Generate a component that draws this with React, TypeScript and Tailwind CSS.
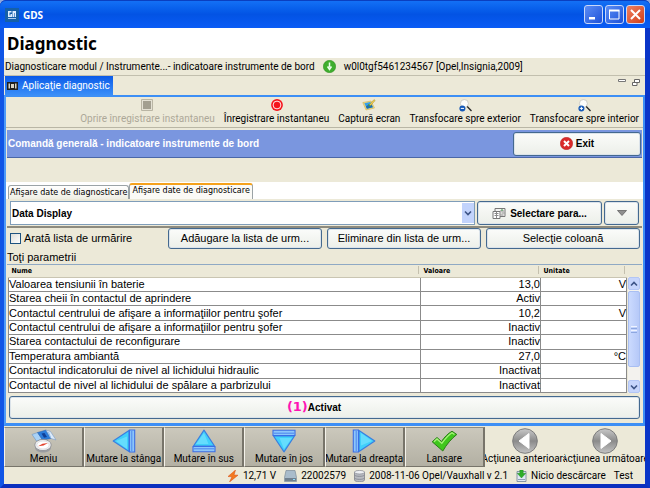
import React from "react";

const UI = "font-[Roboto,Tahoma,sans-serif]";
const TITLE = "font-['Noto_Sans',Tahoma,sans-serif]";
const ARIAL = "font-['Liberation_Sans',Arial,sans-serif]";
const BOLD = "font-['Liberation_Sans',Arial,sans-serif] text-[10px] font-bold";
const SMALL = "font-['DejaVu_Sans_Condensed','DejaVu_Sans',sans-serif]";
const BUTTON =
  "flex items-center justify-center rounded-[3px] border border-[#44698f] bg-linear-to-b from-[#fbfcfa] to-[#ecefe9] shadow-[inset_0_0_0_1px_#dbe3ea] whitespace-nowrap text-black";

const rows = [
  ["Valoarea tensiunii în baterie", "13,0", "V"],
  ["Starea cheii în contactul de aprindere", "Activ", ""],
  ["Contactul centrului de afişare a informaţiilor pentru şofer", "10,2", "V"],
  ["Contactul centrului de afişare a informaţiilor pentru şofer", "Inactiv", ""],
  ["Starea contactului de reconfigurare", "Inactiv", ""],
  ["Temperatura ambiantă", "27,0", "°C"],
  ["Contactul indicatorului de nivel al lichidului hidraulic", "Inactivat", ""],
  ["Contactul de nivel al lichidului de spălare a parbrizului", "Inactivat", ""],
];

function TitleBar() {
  const control =
    "flex h-[19px] w-[19px] items-center justify-center rounded-[3px] border border-[#c8d8fa]";
  return (
    <header className="flex h-7 shrink-0 items-center rounded-t-md border-t border-[#0a3fc0] bg-linear-to-b from-[#1470f5] via-[#0353e4] to-[#0a5cf5] pr-[5px] pl-[5px]">
      <svg className="h-[14px] w-[14px]" viewBox="0 0 14 14" aria-hidden="true">
        <rect width="14" height="14" fill="#1560a8" />
        <path d="M3 3h3.500v1.500H4.500v3h1V6H7v3H3zM7.500 3h3.500v6H9.800V5h-.6v4H7.500zM3 10h8v.8H3z" fill="#dfeeff" />
      </svg>
      <span className={`${TITLE} ml-1 flex-1 text-[10px] leading-4 font-bold text-white`}>GDS</span>
      <div className="flex gap-[2px]">
        <button aria-label="Minimizare" className={`${control} bg-linear-to-br from-[#5c8df5] to-[#1e50d8]`}>
          <svg className="h-[13px] w-[13px]" viewBox="0 0 13 13"><path d="M2 9h6v2.500H2z" fill="#fff" /></svg>
        </button>
        <button aria-label="Maximizare" className={`${control} bg-linear-to-br from-[#5c8df5] to-[#1e50d8]`}>
          <svg className="h-[13px] w-[13px]" viewBox="0 0 13 13"><path d="M1.500 2.500h9.500v8.500H1.500z" fill="none" stroke="#fff" /><path d="M1 1.500h10.500v2H1z" fill="#fff" /></svg>
        </button>
        <button aria-label="Închidere" className={`${control} bg-linear-to-br from-[#f08060] to-[#d03c10]`}>
          <svg className="h-[13px] w-[13px]" viewBox="0 0 13 13"><path d="M2 2l9 9M11 2l-9 9" stroke="#fff" strokeWidth="2" /></svg>
        </button>
      </div>
    </header>
  );
}

function StopIcon() {
  return (
    <svg className="h-3 w-3" viewBox="0 0 12 12">
      <path d="M.5.5h11v11H.5z" fill="#e4e1d4" stroke="#b9b5a4" />
      <path d="M2 2h8v8H2z" fill="#a39f90" />
    </svg>
  );
}

function RecordIcon() {
  return (
    <svg className="h-3 w-3" viewBox="0 0 12 12">
      <circle cx="6" cy="6" r="5.900" fill="#f5141c" />
      <circle cx="6" cy="6" r="3.900" fill="none" stroke="#fff" strokeWidth=".9" />
    </svg>
  );
}

function CaptureIcon() {
  return (
    <svg className="h-3 w-[14px]" viewBox="0 0 14 12">
      <path d="M.8 3.500L9 2l3.500 7L4 11z" fill="#f0d97a" stroke="#c9a94a" strokeWidth=".5" />
      <path d="M2.300 4.300l6-1.200 2.600 5.200-6 1.500z" fill="#36a0ea" />
      <path d="M3.800 7.500l2.500-1.700 1.500 1 2-.8 1.100 2.300-6 1.500z" fill="#1f6fae" />
      <path d="M6 5l2 .5 1 1.500-2 .5z" fill="#3e9c4c" />
      <path d="M7.300 5.800L12 .6l1.200 1L8.600 6.500z" fill="#f2cf49" stroke="#8b7a35" strokeWidth=".4" />
    </svg>
  );
}

function LensIcon({ plus }: { plus?: boolean }) {
  return (
    <svg className="h-[13px] w-[13px]" viewBox="0 0 13 13">
      <circle cx="5.400" cy="4.500" r="4" fill="#fdfdfb" stroke="#c3c2bc" strokeWidth=".8" />
      <path d="M8.200 7.500l4.300 4.500" stroke="#282828" strokeWidth="1.300" />
      <circle cx="3.400" cy="9.400" r="3" fill="#1559b8" />
      <path d="M1.800 9.400h3.200" stroke="#fff" />
      {plus && <path d="M3.400 7.800v3.200" stroke="#fff" />}
    </svg>
  );
}

function ToolButton({ icon, label, disabled }: { icon: React.ReactNode; label: string; disabled?: boolean }) {
  return (
    <button disabled={disabled} className="flex flex-col items-center whitespace-nowrap text-black disabled:text-[#aca899]">
      <span className="flex h-[14px] items-center">{icon}</span>
      <span className="leading-[14px]">{label}</span>
    </button>
  );
}

function MenuIcon() {
  return (
    <svg className="h-6 w-[26px]" viewBox="0 0 26 24">
      <path d="M1 5.500L6.500 3.500l5 7L5.500 12z" fill="#a9d2f7" stroke="#6f93bd" strokeWidth=".6" />
      <path d="M6.500 3.500L15 1l5 8.500-8.500 1.500z" fill="#2b7ddb" stroke="#2a5fa8" strokeWidth=".5" />
      <path d="M10.500 4.500l3-.5 2.500 4-3 .8z" fill="#0f3f96" />
      <path d="M15 1l4.500 1.500L25 11l-5-1.500z" fill="#dcebfb" stroke="#7b9cc4" strokeWidth=".6" />
      <path d="M17.500 3l2 5.500" stroke="#8fc0f2" />
      <path d="M4 16.500v2.500c1 6 15 6 16 0v-2.500z" fill="#9a9ca0" />
      <ellipse cx="12" cy="16" rx="8.200" ry="5.600" fill="#f1f1f3" stroke="#8a8c90" strokeWidth=".8" />
      <ellipse cx="12" cy="16" rx="6.200" ry="4" fill="#fff" stroke="#c5c7cb" strokeWidth=".5" />
      <path d="M7 17.200l4.500-2.400 5.500-.8-4.500 2.600z" fill="#e2412c" />
    </svg>
  );
}

function ArrowIcon({ turn }: { turn: string }) {
  return (
    <svg className={`h-6 w-6 ${turn}`} viewBox="0 0 24 24">
      <path d="M12 1.200L22.500 17h-21z" fill="#3fd0fb" stroke="#3a7fe0" strokeWidth="1.200" strokeLinejoin="round" />
      <path d="M12 4l4.500 11H4z" fill="#7fe6ff" opacity=".6" />
      <path d="M1 17.500h22v5.200H1z" fill="#8cc6fb" stroke="#3b6ee6" strokeWidth="1.100" />
      <path d="M2 19.800h20" stroke="#4c86ee" />
    </svg>
  );
}

function CheckIcon() {
  return (
    <svg className="h-6 w-[27px]" viewBox="0 0 27 24">
      <path d="M1.200 12.800L6 8.500l4.500 4C13 8.500 17 4.500 21 2.200l4.800 3.300C20.500 9.500 15.500 15.500 11.800 22z" fill="#3fc71c" stroke="#2a7d18" strokeWidth="1" strokeLinejoin="round" />
      <path d="M3 12.700L6 10l4.800 4.400C14 10 17.500 6 21 3.800l2.500 1.700" fill="none" stroke="#a9f27c" strokeWidth="1.300" />
    </svg>
  );
}

function RoundIcon({ next }: { next?: boolean }) {
  return (
    <svg className="h-[26px] w-[26px]" viewBox="0 0 26 26">
      <defs>
        <linearGradient id="steel" x1="0" y1="0" x2="0" y2="1">
          <stop offset="0" stopColor="#c9c9c9" />
          <stop offset=".5" stopColor="#8b8b8b" />
          <stop offset="1" stopColor="#c4c4c4" />
        </linearGradient>
      </defs>
      <circle cx="13" cy="13" r="12.300" fill="url(#steel)" stroke="#7d7d7d" />
      <path d={next ? "M9 5.500v15L19 13z" : "M17 5.500v15L7 13z"} fill="#fff" stroke="#fff" strokeLinejoin="round" />
    </svg>
  );
}

function BigButton({ icon, label }: { icon: React.ReactNode; label: string }) {
  return (
    <button className="flex h-10 min-w-0 flex-col items-center overflow-hidden border border-r-2 border-t-[#8f8c80] border-r-[#77746a] border-b-[#77746a] border-l-[#f4f2ea] bg-linear-to-b from-[#cbc8bc] to-[#b3b0a3] whitespace-nowrap">
      <span className="flex h-[25px] items-center">{icon}</span>
      <span className="leading-3">{label}</span>
    </button>
  );
}

function FlatButton({ icon, label }: { icon: React.ReactNode; label: string }) {
  return (
    <button className="flex h-10 min-w-0 flex-col items-center overflow-hidden pt-px whitespace-nowrap">
      <span className="flex h-[25px] items-center">{icon}</span>
      <span className="leading-3">{label}</span>
    </button>
  );
}

function ScrollBar() {
  const end = "flex h-[13px] shrink-0 items-center justify-center rounded-[2px] border border-[#b3c6f5] bg-[#c6d5fc]";
  return (
    <div className="flex w-3 shrink-0 flex-col bg-[#f3f2ee]">
      <button aria-label="Sus" className={end}>
        <svg className="h-2 w-2" viewBox="0 0 8 8"><path d="M1 5.500l3-3 3 3" fill="none" stroke="#3d5486" strokeWidth="1.600" /></svg>
      </button>
      <div className="mt-px flex h-[76px] flex-col items-center justify-center gap-px rounded-[2px] border border-[#a9bff2] bg-linear-to-r from-[#cbdafe] to-[#b6c9f8]">
        <i className="h-px w-[6px] bg-[#eef3ff]" />
        <i className="h-px w-[6px] bg-[#8da7e0]" />
        <i className="h-px w-[6px] bg-[#eef3ff]" />
        <i className="h-px w-[6px] bg-[#8da7e0]" />
      </div>
      <div className="flex-1" />
      <button aria-label="Jos" className={end}>
        <svg className="h-2 w-2" viewBox="0 0 8 8"><path d="M1 2.500l3 3 3-3" fill="none" stroke="#3d5486" strokeWidth="1.600" /></svg>
      </button>
    </div>
  );
}

function ParameterTable() {
  return (
    <div className="border-t border-[#8fa9c4] pr-[2px] pl-px">
      <div className="flex gap-px">
        <div className="flex-1">
          <table className="h-32 w-full table-fixed border-collapse text-[11px]">
            <colgroup>
              <col />
              <col className="w-[120px]" />
              <col className="w-[86px]" />
            </colgroup>
            <thead>
              <tr className={`${SMALL} h-3 text-left text-[7px] leading-[10px]`}>
                {["Nume", "Valoare", "Unitate"].map((name) => (
                  <th key={name} className="border-b border-[#c9c5b2] p-0 pl-[3px] font-bold">
                    <span className="flex justify-between">
                      {name}
                      <i className="mr-[2px] h-2 w-px bg-[#c4c0ae]" />
                    </span>
                  </th>
                ))}
              </tr>
            </thead>
            <tbody className="bg-white">
              {rows.map(([name, value, unit], i) => (
                <tr key={i} className="leading-[13px]">
                  <td className="border border-t-0 border-[#8b8b8b] p-0 whitespace-nowrap">{name}</td>
                  <td className="border border-t-0 border-[#8b8b8b] p-0 text-right">{value}</td>
                  <td className="border border-t-0 border-[#8b8b8b] p-0 text-right">{unit}</td>
                </tr>
              ))}
            </tbody>
          </table>
        </div>
        <div className="flex pt-3">
          <ScrollBar />
        </div>
      </div>
    </div>
  );
}

function DataPanel() {
  return (
    <div className={`${ARIAL} mx-px flex flex-col`}>
      <div className="flex items-center border-b-2 border-[#8e8b7e] pt-[2px] pr-[3px] pb-px pl-[3px]">
        <div className="relative mr-[2px] flex-1">
          <select aria-label="Afişare" className={`${BOLD} block h-6 w-full appearance-none border border-[#7f9db9] bg-white pl-px`}>
            <option>Data Display</option>
          </select>
          <span className="pointer-events-none absolute top-[2px] right-px flex h-5 w-3 items-center justify-center bg-[#c2d3fc]">
            <svg className="h-2 w-2" viewBox="0 0 8 8"><path d="M1 2.500l3 3 3-3" fill="none" stroke="#3d5486" strokeWidth="1.600" /></svg>
          </span>
        </div>
        <button className={`${BUTTON} ${BOLD} mr-[2px] h-6 w-[125px] gap-1`}>
          <svg className="h-[13px] w-[14px]" viewBox="0 0 14 13">
            <path d="M3 1.500h10v8H3z" fill="#f3f3f1" stroke="#777" />
            <path d="M1 4.500h7v7H1z" fill="#fff" stroke="#777" />
            <path d="M2.500 6.500h4M2.500 8.500h4M4.500 5v6M8 4h4M9.500 6h3M8.500 8h3" stroke="#8b8b8b" />
            <path d="M9 3h2" stroke="#3f9a4a" />
          </svg>
          Selectare para...
        </button>
        <button aria-label="Mai multe" className={`${BUTTON} h-6 w-[35px]`}>
          <svg className="h-[6px] w-[10px]" viewBox="0 0 10 6"><path d="M.5.5h9L5 5.500z" fill="#8f8f8f" stroke="#555" strokeWidth=".7" /></svg>
        </button>
      </div>
      <div className="flex items-center gap-[5px] pr-[2px] text-[11px]">
        <label className="flex flex-1 items-center gap-[3px] pl-[3px] whitespace-nowrap">
          <input type="checkbox" className="h-[11px] w-[11px] appearance-none border border-[#1d5280] bg-linear-to-br from-[#dcdcd7] to-white" />
          Arată lista de urmărire
        </label>
        <button className={`${BUTTON} h-[21px] w-[154px]`}>Adăugare la lista de urm...</button>
        <button className={`${BUTTON} h-[21px] w-[154px]`}>Eliminare din lista de urm...</button>
        <button className={`${BUTTON} h-[21px] w-[154px]`}>Selecţie coloană</button>
      </div>
      <h2 className="pt-px text-[11px] leading-[14px]">Toţi parametrii</h2>
      <ParameterTable />
      <div className="px-[2px] pt-[3px] pb-1">
        <button className={`${BUTTON} ${BOLD} h-[23px] w-full`}>
          <span className="relative">
            <span className="absolute right-full bottom-0 font-['DejaVu_Sans',sans-serif] text-[13px] leading-4 text-[#ff14b4]">(1)</span>
            Activat
          </span>
        </button>
      </div>
    </div>
  );
}

function StatusBar() {
  return (
    <footer className="flex h-[17px] items-center justify-end gap-2 pr-3 whitespace-nowrap">
      <span className="flex items-center gap-1">
        <svg className="h-3 w-3" viewBox="0 0 12 12"><path d="M8.500 0L1 6.500l4 .3L2.500 12 11 5.200 7 5z" fill="#f47a20" stroke="#d9480f" strokeWidth=".5" /></svg>
        12,71 V
      </span>
      <span className="flex items-center gap-1">
        <svg className="h-3 w-[13px]" viewBox="0 0 13 12"><path d="M2 .5h9l1.500 7v4H.5v-4z" fill="#a9bccb" stroke="#7d8d9a" strokeWidth=".7" /><path d="M1 8h11v3H1z" fill="#71818f" /><path d="M9 9.500h2" stroke="#8fe0ff" /></svg>
        22002579
      </span>
      <span className="flex items-center gap-1">
        <svg className="h-3 w-[11px]" viewBox="0 0 11 12"><path d="M.5 2v8c0 2.300 10 2.300 10 0V2z" fill="#b9bcc2" stroke="#777b84" strokeWidth=".7" /><ellipse cx="5.500" cy="2.200" rx="5" ry="1.800" fill="#eef0f3" stroke="#777b84" strokeWidth=".6" /><path d="M.5 5c1 1.800 9 1.800 10 0M.5 8c1 1.800 9 1.800 10 0" fill="none" stroke="#777b84" strokeWidth=".7" /></svg>
        2008-11-06 Opel/Vauxhall v 2.1
      </span>
      <span className="flex items-center gap-1">
        <svg className="h-3 w-[11px]" viewBox="0 0 11 12"><path d="M1 1.500h9v10H1z" fill="#dfe8f2" stroke="#6f8196" strokeWidth=".8" /><path d="M2 9.500h7" stroke="#8fa0b4" /><path d="M3.800 0h3.400v3.300h2.600L5.500 8 1.200 3.300h2.600z" fill="#2fae28" stroke="#1d8420" strokeWidth=".4" /></svg>
        Nicio descărcare
      </span>
      <span>Test</span>
    </footer>
  );
}

export default function App() {
  const tab =
    "rounded-t-[3px] border border-b-0 border-[#9ba3a6] font-['DejaVu_Sans',sans-serif] text-[8px] leading-[11px] whitespace-nowrap";
  return (
    <div className="min-h-screen bg-[#8fa8dc]">
      <div className={`${UI} flex min-h-screen flex-col rounded-t-md bg-[#0a3fd6] text-[10px] text-black`}>
        <TitleBar />
        <div className="flex flex-1 flex-col border-r-[5px] border-b-4 border-l-4 border-r-[#0a35c8] border-b-[#0a2fbe] border-l-[#1055e6] bg-[#ece9d8]">
          <h1 className={`${TITLE} h-[30px] bg-white pl-[3px] text-[17px] leading-[31px] font-bold`}>Diagnostic</h1>
          <div className="flex h-[18px] items-center border-b border-[#c2bfae] pl-px whitespace-nowrap">
            Diagnosticare modul / Instrumente...- indicatoare instrumente de bord
            <svg className="mr-1 ml-2 h-[13px] w-[13px]" viewBox="0 0 13 13">
              <circle cx="6.500" cy="6.500" r="6.200" fill="#3fae2e" stroke="#2b8a1f" strokeWidth=".5" />
              <path d="M6.500 2.500v5M4.500 6.500l2 3 2-3" fill="none" stroke="#eaffea" strokeWidth="1.500" />
            </svg>
            <span className="pl-1">w0l0tgf5461234567 [Opel,Insignia,2009]</span>
          </div>
          <div className="flex h-[19px] items-start justify-between pl-px">
            <a href="#diagnostic" className="flex h-[19px] items-center gap-1 bg-linear-to-b from-[#0a5ae8] to-[#3a8ef8] pr-[3px] pl-[2px] text-white">
              <svg className="h-2 w-[11px]" viewBox="0 0 11 8"><path d="M0 0h11v8H0z" fill="#20201e" /><path d="M1.500 1.500h1.500v5H1.500zM8 1.500h1.500v5H8zM4 2h3v4H4z" fill="#d8d4c4" /></svg>
              Aplicaţie diagnostic
            </a>
            <div className="flex gap-[6px] pt-[2px] pr-[5px]">
              <svg className="h-2 w-2" viewBox="0 0 8 8"><path d="M.5 1.500h7v2h-7z" fill="#fff" stroke="#777" /></svg>
              <svg className="h-2 w-2" viewBox="0 0 8 8"><path d="M2.500 1.500h5v3h-5zM.5 4.500h4.500v3H.5z" fill="#fff" stroke="#666" /></svg>
            </div>
          </div>
          <main className="border-2 border-b-[3px] border-[#3d8ff5] border-l-[#4f9bf8]">
            <div className="flex h-[31px] items-center justify-end gap-[9px] border-b border-[#b9b6a5] pr-1 pl-1">
              <ToolButton disabled icon={<StopIcon />} label="Oprire înregistrare instantaneu" />
              <ToolButton icon={<RecordIcon />} label="Înregistrare instantaneu" />
              <ToolButton icon={<CaptureIcon />} label="Captură ecran" />
              <ToolButton icon={<LensIcon />} label="Transfocare spre exterior" />
              <ToolButton icon={<LensIcon plus />} label="Transfocare spre interior" />
            </div>
            <div className={`${BOLD} mx-px mt-[2px] flex h-7 items-center justify-between border-b border-[#4a67a8] bg-[#7a96df] pr-px pl-px text-white`}>
              <h2>Comandă generală - indicatoare instrumente de bord</h2>
              <button className={`${BUTTON} h-6 w-32 gap-[3px]`}>
                <svg className="h-[13px] w-[13px]" viewBox="0 0 13 13">
                  <circle cx="6.500" cy="6.500" r="6.200" fill="#d92a2a" stroke="#b51e1e" strokeWidth=".5" />
                  <path d="M4 4l5 5M9 4L4 9" stroke="#fff" strokeWidth="2" />
                </svg>
                Exit
              </button>
            </div>
            <div className="h-6" />
            <nav className="flex h-[17px] items-end bg-white pl-[2px]">
              <a href="#date-1" className={`${tab} h-[14px] bg-linear-to-b from-white to-[#efeee4] px-px pt-px`}>Afişare date de diagnosticare</a>
              <a href="#date-2" className={`${tab} h-4 border-t-2 border-t-[#f5a21c] bg-[#fbfaf6] px-[2px]`}>Afişare date de diagnosticare</a>
            </nav>
            <DataPanel />
          </main>
          <div className="mt-px grid grid-cols-8">
            <BigButton icon={<MenuIcon />} label="Meniu" />
            <BigButton icon={<ArrowIcon turn="-rotate-90" />} label="Mutare la stânga" />
            <BigButton icon={<ArrowIcon turn="rotate-0" />} label="Mutare în sus" />
            <BigButton icon={<ArrowIcon turn="rotate-180" />} label="Mutare în jos" />
            <BigButton icon={<ArrowIcon turn="rotate-90" />} label="Mutare la dreapta" />
            <BigButton icon={<CheckIcon />} label="Lansare" />
            <FlatButton icon={<RoundIcon />} label="Acţiunea anterioară" />
            <FlatButton icon={<RoundIcon next />} label="Acţiunea următoare" />
          </div>
          <StatusBar />
        </div>
      </div>
    </div>
  );
}
